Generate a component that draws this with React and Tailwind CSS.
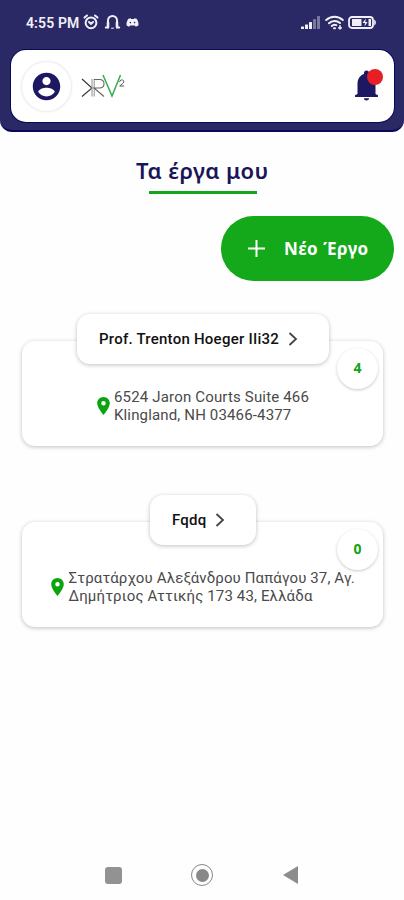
import React from 'react';

function StatusBar() {
  return (
    <div className="flex h-[50px] items-start pt-[14px] pl-[26px] pr-[27px] text-[#f1f0f8]">
      <span className="w-[55px] whitespace-nowrap font-['Roboto',sans-serif] text-[14px] font-semibold leading-[18px] tracking-[0.12px]">4:55 PM</span>
      <svg className="ml-[2px]" width="16" height="16" viewBox="0 0 16 16" fill="none" stroke="currentColor" strokeWidth="2" strokeLinecap="round">
        <circle cx="8" cy="8.8" r="5.4" />
        <path d="M1.500 3.600 4 1.500M14.500 3.600 12 1.500M6 8 8 9.800l2-1.800" />
      </svg>
      <svg className="ml-[5px]" width="17" height="16" viewBox="0 0 17 16" fill="none" stroke="currentColor" strokeWidth="2" strokeLinecap="round">
        <path d="M1.800 13.400H4V6.500a4.500 4.500 0 0 1 9 0v6.900h2.200" />
        <path d="M4 8.500v4.500M13 8.500v4.500" strokeWidth="2.600" />
        <path d="M7.500 14.200h2" strokeWidth="1" />
      </svg>
      <svg className="ml-[5px] mt-[4px]" width="13" height="9" viewBox="0 0 13 10" preserveAspectRatio="none" fill="currentColor" fillRule="evenodd">
        <path d="M2.400.9 4.600.3l.5.900h2.800l.5-.9 2.200.6C12 3 12.800 5.600 12.400 8.300L9.800 9.600 8.900 8.200H4.100L3.200 9.600.6 8.300C.2 5.600 1 3 2.400.9ZM4.400 4.200a.8.900 0 1 0 0 1.800.8.900 0 0 0 0-1.800Zm4.200 0a.8.900 0 1 0 0 1.800.8.900 0 0 0 0-1.800Z" />
      </svg>
      <svg className="ml-auto mt-[2px]" width="20" height="13" viewBox="0 0 20 13" fill="currentColor">
        <rect x="0" y="10.500" width="3" height="2.500" rx=".5" />
        <rect x="4" y="8.500" width="3" height="4.500" rx=".5" />
        <rect x="8" y="6" width="3" height="7" rx=".5" />
        <rect x="12" y="3" width="3" height="10" rx=".5" opacity=".4" />
        <rect x="16" y="0" width="3" height="13" rx=".5" opacity=".4" />
      </svg>
      <svg className="ml-[4px] mt-px" width="19" height="15" viewBox="0 0 19 15" fill="none" stroke="currentColor" strokeWidth="2" strokeLinecap="round">
        <path d="M1.200 5a12 12 0 0 1 16.600 0M4 8.200a8 8 0 0 1 11-.2M6.800 11a4 4 0 0 1 4.500-.8" />
        <path d="M9 13.200h1" />
        <path d="M15 10.800v3M13.800 12.800l1.200 1 1.200-1" strokeWidth="1.500" />
      </svg>
      <svg className="ml-[4px] mt-[2px]" width="29" height="13" viewBox="0 0 29 13" fill="none">
        <rect x="1" y="1" width="24" height="11" rx="3" stroke="currentColor" strokeWidth="1.800" />
        <rect x="4" y="3" width="9.500" height="7" rx=".5" fill="currentColor" />
        <path d="m17.800 2.500-3.300 4.500h2.500l-.5 3.500 3-4.500H17.300Z" fill="currentColor" />
        <rect x="20.500" y="3" width="2.500" height="7" fill="currentColor" />
        <path d="M26.200 3.500c2.200 1 2.200 5 0 6Z" fill="currentColor" />
      </svg>
    </div>
  );
}

function Logo() {
  return (
    <svg width="46" height="25" viewBox="0 0 46 25" fill="none" strokeWidth="1.100">
      <path d="m2 5 10 9L2 22.500" stroke="#333" />
      <path d="M12 5v17.500M14.200 5v17.500" stroke="#999" />
      <path d="M14 5.500h5.500c6 0 6 8.500 0 8.500H14l10 8.500" stroke="#666" />
      <path d="m23 1 9 21L40.500 1" stroke="#36ad50" strokeWidth="1.500" />
      <path d="M39.500 8c.3-3 5-2.500 4.200 0-.5 1.500-2 2.200-4 4H44" stroke="#555" strokeWidth="1" />
    </svg>
  );
}

function Header() {
  return (
    <header className="h-[132px] rounded-b-[12px] border-b-2 border-[#0b0857] bg-[#2a2865]">
      <StatusBar />
      <div className="ml-[11px] mr-[10px] flex h-[72px] items-center rounded-[15px] bg-white pl-[11px] pr-[10px] shadow-[0_0_0_1px_#0b0857]">
        <div className="flex size-[49px] items-center justify-center rounded-full bg-white shadow-[0_0_3px_rgba(0,0,0,0.18)]">
          <svg width="33" height="33" viewBox="0 0 24 24" fill="#1d1861">
            <path d="M12 2C6.480 2 2 6.480 2 12s4.480 10 10 10 10-4.480 10-10S17.520 2 12 2zm0 3c1.660 0 3 1.340 3 3s-1.340 3-3 3-3-1.340-3-3 1.340-3 3-3zm0 14.200c-2.500 0-4.710-1.280-6-3.220.03-1.990 4-3.080 6-3.080 1.990 0 5.970 1.090 6 3.080-1.290 1.940-3.500 3.220-6 3.220z" />
          </svg>
        </div>
        <div className="ml-[9px]"><Logo /></div>
        <div className="relative ml-auto h-[32px] w-[30px]">
          <svg width="30" height="32" viewBox="0 0 30 32" fill="#1d1861">
            <path d="M1 27v-1.800l2.500-1.200V14C3.500 8.500 6.500 5 10 4V3a2.500 2.500 0 0 1 5 0v1c3.500 1 6.500 4.500 6.500 10v10l2.500 1.200V27Z" />
            <path d="M9.800 28.200h5.400c-.5 3-4.900 3-5.400 0Z" />
          </svg>
          <span className="absolute -top-px left-[13px] size-[16px] rounded-full bg-[#e71f25]" />
        </div>
      </div>
    </header>
  );
}

function Pin() {
  return (
    <svg className="shrink-0" width="13" height="18" viewBox="0 0 14 20" fill="#0ba40f">
      <path d="M7 0C3.130 0 0 3.130 0 7c0 5.250 7 13 7 13s7-7.750 7-13c0-3.870-3.130-7-7-7zm0 9.500a2.500 2.500 0 0 1 0-5 2.500 2.500 0 0 1 0 5z" />
    </svg>
  );
}

function ProjectCard({ name, pillClass, nameClass, count, lines, gapClass, lineClasses }) {
  return (
    <section className="relative ml-[22px] flex h-[105px] w-[361px] rounded-[13px] bg-white pt-[47px] shadow-[0_1px_4px_rgba(0,0,0,0.25)]">
      <div className={`absolute -top-[27px] flex h-[50px] items-center rounded-[13px] bg-white shadow-[0_1px_4px_rgba(0,0,0,0.25)] ${pillClass}`}>
        <span className={`whitespace-nowrap font-['Roboto',sans-serif] text-[15px] font-medium leading-[20px] text-[#111] ${nameClass}`}>{name}</span>
        <svg width="10" height="14" viewBox="0 0 10 14" fill="none" stroke="#444" strokeWidth="1.800">
          <path d="m1.500 1 6.500 6-6.500 6" />
        </svg>
      </div>
      <div className="absolute left-[315px] top-[7px] flex size-[41px] items-center justify-center rounded-full bg-white pb-[2px] font-['Noto_Sans',sans-serif] text-[14px] font-bold text-[#12a317] shadow-[0_1px_3px_rgba(0,0,0,0.22)]">{count}</div>
      <div className={`flex h-[36px] items-center ${gapClass}`}>
        <Pin />
        <div className="flex flex-col whitespace-nowrap font-['Roboto',sans-serif] text-[15px] leading-[18px] text-[#4a4a4a]">
          {lines.map((line, i) => <span key={line} className={lineClasses[i]}>{line}</span>)}
        </div>
      </div>
    </section>
  );
}

export default function App() {
  return (
    <div className="flex h-[900px] w-[404px] flex-col overflow-hidden bg-[#fefefe]">
      <Header />
      <h1 className="mt-[22px] h-[32px] whitespace-nowrap pl-[136px] font-['Noto_Sans',sans-serif] text-[22px] font-semibold leading-[32px] tracking-[0.45px] text-[#1a1458]">Τα έργα μου</h1>
      <div className="ml-[149px] mt-[5px] h-[3px] w-[108px] bg-[#13a51c]" />
      <button className="ml-[221px] mt-[22px] flex h-[65px] w-[173px] items-center rounded-full bg-[#13a91b] pl-[27px] text-white">
        <svg width="17" height="17" viewBox="0 0 17 17" stroke="currentColor" strokeWidth="2"><path d="M8.500 0v17M0 8.500h17" /></svg>
        <span className="ml-[19px] mt-px whitespace-nowrap font-['Noto_Sans',sans-serif] text-[17px] font-bold leading-[24px] tracking-[0.5px]">Νέο Έργο</span>
      </button>
      <main className="mt-[60px] flex flex-col gap-[76px]">
        <ProjectCard
          name="Prof. Trenton Hoeger IIi32"
          pillClass="left-[55px] w-[252px] pl-[22px]"
          nameClass="w-[189px] tracking-[0.24px]"
          count="4"
          gapClass="ml-[75px] gap-[4px]"
          lines={['6524 Jaron Courts Suite 466', 'Klingland, NH 03466-4377']}
          lineClasses={['tracking-[0.17px]', 'tracking-[0.15px]']}
        />
        <ProjectCard
          name="Fqdq"
          pillClass="left-[128px] w-[106px] pl-[22px]"
          nameClass="w-[43px] tracking-[0.2px]"
          count="0"
          gapClass="ml-[29px] gap-[4.500px]"
          lines={['Στρατάρχου Αλεξάνδρου Παπάγου 37, Αγ.', 'Δημήτριος Αττικής 173 43, Ελλάδα']}
          lineClasses={['tracking-[0.13px]', 'tracking-[0.14px]']}
        />
      </main>
      <nav className="mt-auto flex h-[50px] items-center pl-[105px]">
        <span className="size-[17px] rounded-[3px] bg-[#929292]" />
        <span className="ml-[69px] flex size-[22px] items-center justify-center rounded-full border-[1.5px] border-[#888]">
          <span className="size-[13px] rounded-full bg-[#888]" />
        </span>
        <svg className="ml-[70px]" width="15" height="18" viewBox="0 0 15 18" fill="#8c8c8c"><path d="M15 0v18L0 9Z" /></svg>
      </nav>
    </div>
  );
}
